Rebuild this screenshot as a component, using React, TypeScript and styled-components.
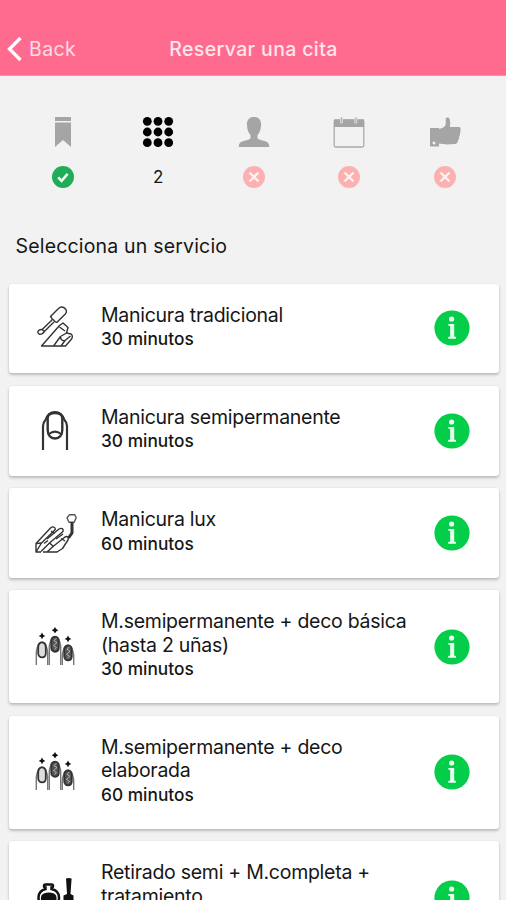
import React from "react";
import styled, { createGlobalStyle } from "styled-components";

const GlobalStyle = createGlobalStyle`
  * { box-sizing: border-box; }
  body { margin: 0; background: #f2f2f2; color: #161616; font-family: Inter, "Liberation Sans", sans-serif; overflow: hidden; }
`;

const Screen = styled.main`
  height: 900px;
  overflow: hidden;
  background: #f2f2f2;
`;

const Header = styled.header`
  display: grid;
  grid-template-columns: 1fr auto 1fr;
  align-items: center;
  height: 76px;
  padding: 23px 6px 0 7px;
  background: #ff6b8f;
  border-bottom: 1px solid #fb8fa8;
  color: #ffe6ec;
`;

const BackButton = styled.button`
  display: flex;
  align-items: center;
  gap: 6px;
  padding: 0;
  border: 0;
  background: none;
  color: #ffdce5;
  font: 400 19.5px Inter, sans-serif;
  letter-spacing: 0.4px;
`;

const Title = styled.h1`
  margin: 0;
  font-size: 19.5px;
  font-weight: 500;
  letter-spacing: 0.36px;
`;

const Steps = styled.nav`
  display: grid;
  grid-template-columns: repeat(5, 95.5px);
  height: 147px;
  padding: 40px 0 0 15px;
`;

const Step = styled.div`
  display: flex;
  flex-direction: column;
  align-items: center;
  gap: 17px;
`;

const StepStatus = styled.span`
  display: flex;
  align-items: center;
  justify-content: center;
  height: 24px;
  font-size: 17px;
`;

const SectionTitle = styled.h2`
  height: 60.6px;
  margin: 0;
  padding: 11px 15.5px 0;
  font-size: 19.5px;
  line-height: 25px;
  font-weight: 400;
  letter-spacing: 0.18px;
`;

const List = styled.div`
  display: flex;
  flex-direction: column;
  gap: 12.4px;
  padding: 0 7px 0 9px;
`;

const Card = styled.article<{ $tall: boolean }>`
  display: grid;
  grid-template-columns: 92px minmax(0, 1fr) 95px;
  align-items: center;
  flex: none;
  height: ${(p) => (p.$tall ? 113.2 : 89.8)}px;
  border-radius: 3px;
  background: #fff;
  box-shadow: 0 2px 3px rgba(0, 0, 0, 0.22), 0 0 2px rgba(0, 0, 0, 0.08);
`;

const IconCell = styled.div`
  display: flex;
  justify-content: center;
`;

const Details = styled.div`
  padding-bottom: 2px;
  white-space: nowrap;
`;

const Name = styled.div`
  font-size: 19.5px;
  line-height: 23.6px;
  letter-spacing: -0.27px;
`;

const Duration = styled.div`
  font-size: 17.3px;
  line-height: 24px;
  font-weight: 500;
  letter-spacing: 0.02px;
`;

const InfoButton = styled.button`
  display: flex;
  justify-content: center;
  padding: 0;
  border: 0;
  background: none;
`;

const grey = "#a5a5a5";

const Bookmark = () => (
  <svg width="32" height="32" viewBox="0 0 32 32" fill={grey}>
    <path d="M8 1h16v4H8zM8 6.500h16v24.500l-8-7-8 7z" />
  </svg>
);

const Dots = () => (
  <svg width="32" height="32" viewBox="0 0 32 32">
    {[5.3, 16, 26.7].flatMap((y) =>
      [5.3, 16, 26.7].map((x) => <circle key={`${x}-${y}`} cx={x} cy={y} r="4.400" />)
    )}
  </svg>
);

const Person = () => (
  <svg width="32" height="32" viewBox="0 0 32 32" fill={grey}>
    <path d="M16 1c5 0 7.500 3.200 7 8.500-.2 4-1.400 7.500-3.500 9.500v3.600c2 1.400 5.700 2 8.300 3 2.400.9 3.500 2.400 3.500 5.400H.7c0-3 1.100-4.500 3.500-5.400 2.600-1 6.300-1.600 8.300-3V19C10.400 17 9.200 13.500 9 9.500 8.500 4.200 11 1 16 1z" />
  </svg>
);

const Calendar = () => (
  <svg width="32" height="32" viewBox="0 0 32 32" fill="none">
    <rect x="1.200" y="4" width="29.600" height="27" rx="1.500" stroke="#ababab" strokeWidth="1.300" />
    <path d="M1 3.500h30v7.500H1z" fill={grey} />
    <path d="M8.500 2.500v3.500M22.800 2.500v3.500" stroke="#dedede" strokeWidth="3" strokeLinecap="round" />
    <path d="M8.500 2v4M22.800 2v4" stroke="#b5b5b5" strokeWidth="1.300" strokeLinecap="round" />
  </svg>
);

const Thumb = () => (
  <svg width="32" height="32" viewBox="0 0 32 32" fill={grey}>
    <path d="M9 13c4-.6 7.300-1.700 7.700-5V3c0-2 3.600-2.200 4 .3.800 3.200.6 5.700 0 7.700h9.300c1.500 0 2 1.600 1.400 3.500.2 1 .1 2-.6 3 .3 1.400 0 2.500-.8 3.500.2 1.500-.2 2.600-1 3.500-.2 2.500-1.400 3.600-4 3.600-5 .4-10 .5-16-.5z" />
    <path fillRule="evenodd" d="M1 12h9v18.500H1zM5 25.500a1.500 1.500 0 1 0 .01 3 1.500 1.500 0 0 0 0-3z" />
  </svg>
);

const Check = () => (
  <svg width="24" height="24" viewBox="0 0 24 24" fill="none">
    <circle cx="12" cy="12" r="11" fill="#21ac57" />
    <path d="M7.200 12.300l3.400 3.500 6-7" stroke="#eafff0" strokeWidth="2.600" />
  </svg>
);

const Cross = () => (
  <svg width="24" height="24" viewBox="0 0 24 24" fill="none">
    <circle cx="12" cy="12" r="11" fill="#fbb1b1" />
    <path d="M7.500 7.500l9 9m0-9l-9 9" stroke="#fff0f0" strokeWidth="2.400" />
  </svg>
);

const Info = () => (
  <svg width="36" height="36" viewBox="0 0 36 36">
    <circle cx="18" cy="18" r="17.600" fill="#04ce49" />
    <circle cx="17.600" cy="9" r="2.600" fill="#e9fff0" />
    <path d="M14.200 14h6v12.500l1.800.6v1.600h-7.800v-1.600l2-.6V16.100l-2-.5z" fill="#e9fff0" />
  </svg>
);

const line = { fill: "none", stroke: "#333", strokeWidth: 1.4, strokeLinejoin: "round" as const };

const Traditional = () => (
  <svg width="60" height="60" viewBox="0 0 60 60" {...line}>
    <path d="M25.500 18.500l8-8c2-2 4-1.800 5.800-.7 2.400 1.600 2.800 4.200 1 6.200l-8.300 8.300c-1.500 0-2-.7-2.300-1-.8-1.200-1.500-1.700-2.700-2-.1-1-.5-2.300-1.500-2.800z" />
    <path d="M27 22l-9.800 9.500M29 24l-9.700 9.500M17.200 31.500c-2.300-.3-4.400 1-4.400 2.600 0 2 2.300 2.700 4 1.800 1.400-.8 2.300-1.300 2.500-2.400z" />
    <path d="M16.500 48l18-20.500L38 25l5 4.500-1.500 5.500 4.500 1c1.800 1.500 1.800 3 .5 5L44 44l-3.500 4z" />
    <path d="M34.500 29l5.500 4M28.500 48l7-9.500 6-3.500M35.500 38.500c0 3 1.500 4.500 4.500 4l5.500-4.500M36 48l4-5.500" />
  </svg>
);

const Nail = () => (
  <svg width="60" height="60" viewBox="0 0 60 60" {...line}>
    <path d="M18 49V25c0-3 1-4.500 2.500-6 1.800-5.500 4.600-8 9.500-8s7.700 2.500 9.500 8c1.500 1.500 2.500 3 2.500 6v24" strokeWidth="2.200" />
    <path d="M22.700 17v12c0 5.300 3 8.500 7.300 8.500s7.300-3.200 7.300-8.500V17c0-3.500-3-5-7.300-5s-7.300 1.500-7.300 5z" strokeWidth="2.400" />
    <path d="M24 33c4-3.200 8-3.200 12 0" strokeWidth="2" />
  </svg>
);

const Luxury = () => (
  <svg width="60" height="60" viewBox="0 0 60 60" {...line}>
    <path d="M11 49v-8.500L25.500 25c2.500-2 5-1 4.800 1.500L16.500 40 11 49h5" />
    <path d="M22 36l12-10c2.800-1.500 4.800-.2 4 2.500L24.500 40 16 48.500" />
    <path d="M18 49h14l5.500-3.500 5.500-8.500c1-3-.7-4.300-3.300-2.800L28 43.500 22 49" />
    <path d="M11.500 40.500l5-.5M19 40.500l4-3M31 36l7-5M24.500 40l4 3.500M26 28l3.500 2.500M36 35.500l4 2.500" />
    <path d="M42 15l2.500-3.300h5.300l1.400 3-2 4.500H44z" stroke="#555" />
    <path d="M47 19v11l-3.500 5" strokeWidth="3" />
  </svg>
);

const Finger = ({ x, y, decorated }: { x: number; y: number; decorated: boolean }) => (
  <g transform={`translate(${x} ${y})`}>
    <path d={`M-5.700 ${48 - y}V10c0-2 .5-3 1.200-5C-3.800 1-2.500 0 0 0s3.800 1 4.500 5c.7 2 1.200 3 1.200 5v${38 - y}`} stroke="#777" />
    <path d="M-3.800 5c0-6.500 7.600-6.500 7.600 0v6c0 5.500-7.600 5.500-7.600 0z" fill={decorated ? "#555" : "#ddd"} strokeWidth="1.800" />
    {decorated && <path d="M1.500 1.500l-2.500 2.500 3 2-3.500 3 3 2-2 2" stroke="#ccc" strokeWidth=".8" />}
    <path d="M0-9.700l1.200 2.100 2.100 1.200-2.100 1.200L0-3.100l-1.200-2.100-2.100-1.200 2.100-1.200z" fill="#111" stroke="none" />
  </g>
);

const Decorated = () => (
  <svg width="60" height="60" viewBox="0 0 60 60" {...line}>
    <Finger x={17} y={25.300} decorated={false} />
    <Finger x={30} y={19.600} decorated />
    <Finger x={43} y={28.300} decorated />
  </svg>
);

const Polish = () => (
  <svg width="60" height="60" viewBox="0 0 60 60" fill="none">
    <path d="M20.500 21v-1.500c-2 0-2-3 0-3h6c2 0 2 3 0 3V21c5 1.200 7.500 4.300 7.500 8.500 0 5-2 8-5 10H18.500c-3-2-5-5-5-10 0-4.200 2.500-7.300 7-8.500z" stroke="#111" strokeWidth="2.500" />
    <path d="M16.500 27.500c2-4 13-4 14.500 0 1.500 4 0 7.500-3.500 10.500h-7.500c-3.500-3-5-6.500-3.500-10.500z" fill="#111" />
    <path d="M41 10.500q2.800-1 5.600 0L45.500 26l3 1.500V40H38.500V27.500l3.500-1.500z" fill="#111" />
  </svg>
);

const icons = { traditional: Traditional, nail: Nail, luxury: Luxury, decorated: Decorated, polish: Polish };

type Service = { icon: keyof typeof icons; lines: string[]; minutes: number };

const services: Service[] = [
  { icon: "traditional", lines: ["Manicura tradicional"], minutes: 30 },
  { icon: "nail", lines: ["Manicura semipermanente"], minutes: 30 },
  { icon: "luxury", lines: ["Manicura lux"], minutes: 60 },
  { icon: "decorated", lines: ["M.semipermanente + deco básica", "(hasta 2 uñas)"], minutes: 30 },
  { icon: "decorated", lines: ["M.semipermanente + deco", "elaborada"], minutes: 60 },
  { icon: "polish", lines: ["Retirado semi + M.completa +", "tratamiento"], minutes: 60 },
];

export default function App() {
  return (
    <Screen>
      <GlobalStyle />
      <Header>
        <BackButton>
          <svg width="16" height="26" viewBox="0 0 16 26" fill="none" stroke="#fff" strokeWidth="3.300">
            <path d="M13.500 2L2.500 13l11 11" />
          </svg>
          Back
        </BackButton>
        <Title>Reservar una cita</Title>
      </Header>
      <Steps>
        <Step><Bookmark /><StepStatus><Check /></StepStatus></Step>
        <Step><Dots /><StepStatus>2</StepStatus></Step>
        <Step><Person /><StepStatus><Cross /></StepStatus></Step>
        <Step><Calendar /><StepStatus><Cross /></StepStatus></Step>
        <Step><Thumb /><StepStatus><Cross /></StepStatus></Step>
      </Steps>
      <SectionTitle>Selecciona un servicio</SectionTitle>
      <List>
        {services.map((service) => {
          const Icon = icons[service.icon];
          return (
            <Card key={service.lines[0]} $tall={service.lines.length > 1}>
              <IconCell><Icon /></IconCell>
              <Details>
                {service.lines.map((text) => (
                  <Name key={text}>{text}</Name>
                ))}
                <Duration>{service.minutes} minutos</Duration>
              </Details>
              <InfoButton aria-label="Información"><Info /></InfoButton>
            </Card>
          );
        })}
      </List>
    </Screen>
  );
}
